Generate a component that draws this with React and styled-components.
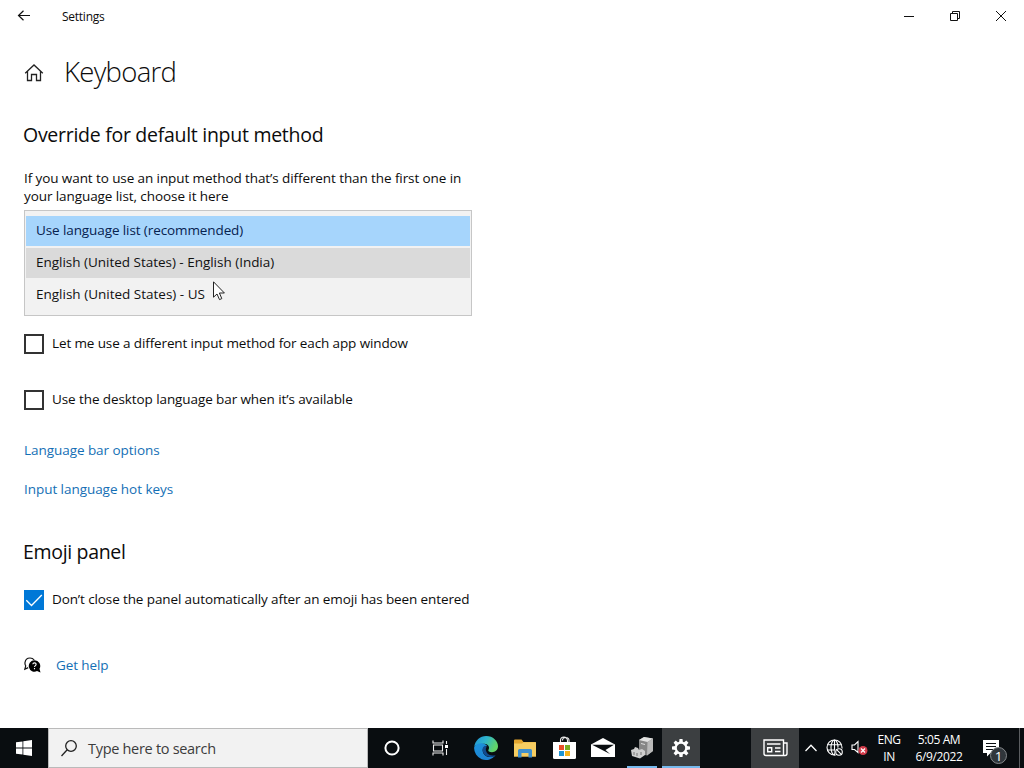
import React, { useState } from "react";
import styled, { createGlobalStyle } from "styled-components";

const GlobalStyle = createGlobalStyle`
    * {
        box-sizing: border-box;
    }

    body {
        margin: 0;
        overflow: hidden;
        font-family: "Open Sans", "Noto Sans", sans-serif;
        color: #0c0c0c;
    }
`;

const Screen = styled.div`
    position: relative;
    display: flex;
    flex-direction: column;
    width: 1024px;
    height: 768px;
    background: #fff;
`;

const TitleBar = styled.header`
    display: flex;
    align-items: center;
    height: 32px;
    padding-left: 17px;
`;

const WindowTitle = styled.span`
    flex: 1;
    margin-left: 31px;
    padding-top: 1px;
    font-size: 12px;
    letter-spacing: -0.25px;
`;

const WindowButton = styled.button`
    display: flex;
    align-items: center;
    justify-content: center;
    width: 46px;
    height: 32px;
    padding: 0;
    border: 0;
    background: none;
`;

const Content = styled.main`
    flex: 1;
    display: flex;
    flex-direction: column;
    align-items: flex-start;
    padding: 20px 24px 0;
`;

const PageHeader = styled.div`
    display: flex;
    align-items: center;
    height: 42px;
`;

const PageTitle = styled.h1`
    margin: 0 0 0 20px;
    padding-bottom: 2px;
    font-size: 27.5px;
    font-weight: 350;
    line-height: 40px;
    letter-spacing: -0.7px;
`;

const SectionTitle = styled.h2`
    margin: ${props => props.$top}px 0 0 -1px;
    font-size: 19.5px;
    font-weight: 400;
    line-height: 28px;
    letter-spacing: ${props => props.$track || 0}px;
`;

const Paragraph = styled.p`
    margin: 20px 0 5px;
    font-size: 13.5px;
    line-height: 18px;
`;

const Line = styled.span`
    display: block;
    white-space: nowrap;
    letter-spacing: ${props => props.$track || 0}px;
`;

const OptionList = styled.ul`
    display: flex;
    flex-direction: column;
    gap: 2px;
    width: 448px;
    height: 106px;
    margin: 0 0 18px;
    padding: 5px 1px;
    border: 1px solid #c6c6c6;
    background: #f2f2f2;
    list-style: none;
`;

const Option = styled.li`
    height: 30px;
    padding-left: 10px;
    font-size: 13.5px;
    line-height: 29px;
    letter-spacing: ${props => props.$track || 0}px;
    color: ${props => props.$selected ? '#07224f' : '#111'};
    background: ${props => props.$selected ? '#a6d5fc' : props.$hovered ? '#dadada' : 'transparent'};
`;

const CheckRow = styled.label`
    display: flex;
    gap: 8px;
    height: 20px;
    margin-top: ${props => props.$top || 0}px;
    font-size: 13.5px;
    line-height: 18px;
`;

const CheckBox = styled.span`
    display: flex;
    align-items: center;
    justify-content: center;
    width: 20px;
    height: 20px;
    border: ${props => props.$checked ? 'none' : '2px solid #333'};
    background: ${props => props.$checked ? '#0078d7' : '#fff'};
`;

const Link = styled.a`
    margin-top: ${props => props.$top || 0}px;
    font-size: 13.5px;
    line-height: 19px;
    letter-spacing: ${props => props.$track || 0}px;
    color: #146fb5;
`;

const HelpRow = styled.div`
    display: flex;
    align-items: center;
    gap: 15px;
    margin-top: 46px;
`;

const Pointer = styled.svg`
    position: absolute;
    left: 213px;
    top: 281px;
`;

const Taskbar = styled.footer`
    display: flex;
    height: 40px;
    background: #090d10;
    color: #fff;
`;

const TaskButton = styled.div`
    display: flex;
    align-items: center;
    justify-content: center;
    width: ${props => props.$width || 48}px;
    height: 40px;
    background: ${props => props.$active ? '#3c3f41' : 'transparent'};
`;

const AppButton = styled(TaskButton)`
    width: ${props => props.$open && !props.$active ? 30 : 38}px;
    margin: ${props => props.$open && !props.$active ? '0 5px 0 4px' : '0 1px 0 0'};
    border-bottom: 2px solid ${props => props.$open ? '#76b9ed' : 'transparent'};
    border-top: 2px solid transparent;
`;

const SearchBox = styled.div`
    display: flex;
    align-items: center;
    width: 320px;
    padding-left: 12px;
    border: 1px solid #bababa;
    background: #f2f2f2;
    color: #3c3c3c;
    font-size: 14.5px;
`;

const SearchText = styled.span`
    margin-left: 11px;
    letter-spacing: -0.3px;
`;

const Apps = styled.div`
    display: flex;
    flex: 1;
    padding-left: 3px;
`;

const TrayText = styled.div`
    width: ${props => props.$width}px;
    padding-top: 3px;
    font-size: 12px;
    line-height: 17px;
    text-align: center;
    letter-spacing: -0.4px;
    white-space: nowrap;
`;

const ShowDesktop = styled.div`
    width: 5px;
    border-left: 1px solid #5a5d60;
`;

const BackIcon = () => (
    <svg width="14" height="12" viewBox="0 0 14 12" fill="none" stroke="#111" strokeWidth="1.2">
        <path d="M13 5.5H1.5M6.5 .7 1.5 5.5l5 4.8" />
    </svg>
);

const HomeIcon = () => (
    <svg width="20" height="20" viewBox="0 0 20 20" fill="none" stroke="#222" strokeWidth="1.3">
        <path d="M1.2 10.2 10 2l8.8 8.2M3.5 8.5v9h4v-6h5v6h4v-9" />
    </svg>
);

const CheckIcon = () => (
    <svg width="20" height="20" viewBox="0 0 20 20" fill="none" stroke="#fff" strokeWidth="1.3">
        <path d="M2.3 10.3 7.5 15.5 17.8 5" />
    </svg>
);

const HelpIcon = () => (
    <svg width="17" height="17" viewBox="0 0 17 17">
        <path d="M4.2 10.600.8 12.300 1.700 8.800A5 5 0 0 1 1 5.500C1.400 2.800 3.500 1 6 1c1.800 0 3.300.8 4.200 2" fill="none" stroke="#111" strokeWidth="1.200" />
        <path d="M10.400 3.300a5.700 5.700 0 1 0 2.600 10.800l3.500 1.500-1-3.800A5.700 5.700 0 0 0 10.400 3.300z" fill="#000" />
        <path d="M8.800 7.300c.2-2 3.400-1.900 3.300.1 0 1.200-1.600 1.200-1.600 2.700M10.500 11v1.200" fill="none" stroke="#fff" strokeWidth="1.100" />
    </svg>
);

const EdgeIcon = () => (
    <svg width="24" height="24" viewBox="0 0 24 24">
        <defs>
            <linearGradient id="edgeTop" x1="0" y1="0" x2="1" y2=".4">
                <stop offset="0" stopColor="#1f8fd6" />
                <stop offset=".5" stopColor="#2eb4cc" />
                <stop offset="1" stopColor="#62d468" />
            </linearGradient>
            <linearGradient id="edgeLow" x1="0" y1="0" x2=".8" y2="1">
                <stop offset="0" stopColor="#1c93dc" />
                <stop offset="1" stopColor="#1d7fcf" />
            </linearGradient>
        </defs>
        <path d="M.2 11C1 4.500 6 0 12.200 0 19 0 24 5 24 10.300c0 3.700-2.800 5.900-6 5.900-2.600 0-4.300-1-3.600-2.200 2-3-.6-6.200-4.200-6.200C5.600 7.800 1.800 8.800.2 11z" fill="url(#edgeTop)" />
        <path d="M.1 11.500C1.500 8.400 5 6.800 8.800 7.500c3 .6 4 1.800 4.400 2.700-2.800-.4-4.700 1.500-4.500 4.500.3 4.500 5 7.700 10.500 5.900l2-.8A12 12 0 0 1 .1 11.500z" fill="url(#edgeLow)" />
        <path d="M11 9.800c-2.300 1-2.800 3-2.300 5.300.9 4.300 5.300 6.900 10.300 5.600 1.200-.3 2.200-1 2.800-1.700-3.600 1.300-7.500.2-9.200-2.800-1.100-1.900-1-3.700-.1-5.200z" fill="#114b8e" />
    </svg>
);

const FolderIcon = () => (
    <svg width="22" height="19" viewBox="0 0 22 19">
        <path d="M0 1.500Q0 .5 1 .5h6.500L9.500 3H21q1 0 1 1v13.500H0z" fill="#e3a52f" />
        <path d="M0 4.500h8l1.500-1.300H22v14.300H0z" fill="#f6cd62" />
        <path d="M4 18.500v-7q0-1.500 1.500-1.500h11q1.500 0 1.500 1.500v7h-3.500V14h-7v4.500z" fill="#3f90ce" />
    </svg>
);

const StoreIcon = () => (
    <svg width="23" height="24" viewBox="0 0 23 24">
        <path d="M7.500 7V4.500a3.500 3.500 0 0 1 7 0V7M9.500 4.500c0-4 6.500-4 6.500 0V7" fill="none" stroke="#eee" strokeWidth="1.100" />
        <path d="M0 6h23v15.500q0 1.500-1.500 1.500h-20Q0 23 0 21.500z" fill="#fff" />
        <path d="M6 9h5v5H6z" fill="#e8502a" />
        <path d="M12 9h5v5h-5z" fill="#7aae22" />
        <path d="M6 15h5v5H6z" fill="#1e94d2" />
        <path d="M12 15h5v5h-5z" fill="#f4b21b" />
    </svg>
);

const MailIcon = () => (
    <svg width="24" height="20" viewBox="0 0 24 20">
        <path d="M0 6.500 12 0l12 6.500V19H0z" fill="#fff" />
        <path d="M1 6.800h22L14.500 12l4.500 4L1 6.800z" fill="#0a0e11" />
    </svg>
);

const DeviceIcon = () => (
    <svg width="23" height="22" viewBox="0 0 23 22">
        <path d="M8 3 13 0l9 1.500v12.500l-6 4.500-8-2z" fill="#868686" />
        <path d="M8 3 13 0l9 1.500L16.500 5z" fill="#e2e2e2" />
        <path d="M16.500 5 22 1.500V14l-6 4.500z" fill="#b9b9b9" />
        <path d="M10 6.500l4 1" stroke="#ddd" />
        <path d="M0 13l3-1 1-2 3 1 1 2 3-1 3 2v4l-5 3.500L1 19z" fill="#cfcfcf" />
        <path d="M3 15v3M6 16v3M10 15v3" stroke="#777" strokeWidth="1" />
    </svg>
);

const GearIcon = () => (
    <svg width="20" height="20" viewBox="-10 -10 20 20">
        {[0, 45, 90, 135, 180, 225, 270, 315].map(angle => (
            <path key={angle} d="M-1.900-5.500-1.500-9h3l.4 3.500z" transform={`rotate(${angle})`} fill="#fff" />
        ))}
        <circle r="5.300" fill="none" stroke="#fff" strokeWidth="2.200" />
    </svg>
);

const NewsIcon = () => (
    <svg width="25" height="18" viewBox="0 0 25 18" fill="none" stroke="#fff" strokeWidth="1.400">
        <path d="M20.500 4V1H1v13.500Q1 16.500 3 16.500h19q2 0 2-2V4h-3.500v12M4 5h13.500M12 9h5.500M12 12.500h5.500" />
        <path d="M4.700 8.700h4v4h-4z" />
    </svg>
);

const GlobeIcon = () => (
    <svg width="18" height="18" viewBox="0 0 18 18" fill="none" stroke="#fff" strokeWidth="1.100">
        <circle cx="8.500" cy="8.500" r="7.500" />
        <ellipse cx="8.500" cy="8.500" rx="3.500" ry="7.500" />
        <path d="M8.500 1v15M1.500 5.800h14M1 11h14" />
        <circle cx="13" cy="13" r="4.500" fill="#090d10" stroke="none" />
        <circle cx="13" cy="13" r="3.300" />
        <path d="M10.700 10.700l4.600 4.600" />
    </svg>
);

const SpeakerIcon = () => (
    <svg width="17" height="16" viewBox="0 0 17 16">
        <path d="M1 5h2.500L7 1.500v11L3.500 9.500H1z" fill="none" stroke="#fff" strokeWidth="1.100" />
        <circle cx="12" cy="10.500" r="4.500" fill="#d13b4a" />
        <path d="M10 8.500l4 4M14 8.500l-4 4" stroke="#fff" strokeWidth="1.200" />
    </svg>
);

const NotificationIcon = () => (
    <svg width="26" height="34" viewBox="0 -8 26 34">
        <path d="M1 1h16v13H8.500L5 17.500V14H1z" fill="#fff" />
        <path d="M4 4.500h10M4 7.500h10M4 10.500h7" stroke="#0a0e11" />
        <circle cx="16.500" cy="16.500" r="8" fill="#30363b" stroke="#84888b" />
        <text x="16.500" y="21.500" fontSize="13.500" fill="#fff" textAnchor="middle">1</text>
    </svg>
);

const options = [
    { label: "Use language list (recommended)", track: -0.1 },
    { label: "English (United States) - English (India)", track: -0.02 },
    { label: "English (United States) - US", track: 0 },
];

const App = () => {
    const [selected, setSelected] = useState(0);
    const [keepOpen, setKeepOpen] = useState(true);

    return (
        <>
            <GlobalStyle />
            <Screen>
                <TitleBar>
                    <BackIcon />
                    <WindowTitle>Settings</WindowTitle>
                    <WindowButton aria-label="Minimize">
                        <svg width="10" height="10" stroke="#111"><path d="M0 5.500h10" /></svg>
                    </WindowButton>
                    <WindowButton aria-label="Restore">
                        <svg width="10" height="10" fill="none" stroke="#111"><path d="M.5 2.500h7v7h-7zM2.500 2.500v-2h7v7h-2" /></svg>
                    </WindowButton>
                    <WindowButton aria-label="Close">
                        <svg width="10" height="10" stroke="#111"><path d="M0 0l10 10M10 0L0 10" /></svg>
                    </WindowButton>
                </TitleBar>

                <Content>
                    <PageHeader>
                        <HomeIcon />
                        <PageTitle>Keyboard</PageTitle>
                    </PageHeader>

                    <SectionTitle $top={27} $track={-0.28}>Override for default input method</SectionTitle>
                    <Paragraph>
                        <Line $track={-0.09}>If you want to use an input method that’s different than the first one in</Line>
                        <Line $track={-0.08}>your language list, choose it here</Line>
                    </Paragraph>
                    <OptionList>
                        {options.map((option, index) => (
                            <Option
                                key={option.label}
                                $selected={index === selected}
                                $hovered={index === 1}
                                $track={option.track}
                                onClick={() => setSelected(index)}
                            >
                                {option.label}
                            </Option>
                        ))}
                    </OptionList>

                    <CheckRow>
                        <CheckBox />
                        <Line $track={-0.12}>Let me use a different input method for each app window</Line>
                    </CheckRow>
                    <CheckRow $top={36}>
                        <CheckBox />
                        <Line $track={-0.09}>Use the desktop language bar when it’s available</Line>
                    </CheckRow>
                    <Link $top={31} $track={-0.05}>Language bar options</Link>
                    <Link $top={20} $track={-0.05}>Input language hot keys</Link>

                    <SectionTitle $top={39} $track={-0.33}>Emoji panel</SectionTitle>
                    <CheckRow $top={24} onClick={() => setKeepOpen(!keepOpen)}>
                        <CheckBox $checked={keepOpen}>{keepOpen && <CheckIcon />}</CheckBox>
                        <Line $track={-0.11}>Don’t close the panel automatically after an emoji has been entered</Line>
                    </CheckRow>

                    <HelpRow>
                        <HelpIcon />
                        <Link $track={-0.1}>Get help</Link>
                    </HelpRow>
                </Content>

                <Taskbar>
                    <TaskButton>
                        <svg width="16" height="16" viewBox="0 0 16 16" fill="#fff">
                            <path d="M0 2.300 6.500 1.400v6.200H0zM7.300 1.300 16 0v7.600H7.300zM0 8.400h6.500v6.200L0 13.700zM7.300 8.400H16V16l-8.700-1.300z" />
                        </svg>
                    </TaskButton>
                    <SearchBox>
                        <svg width="16" height="17" viewBox="0 0 16 17" fill="none" stroke="#222" strokeWidth="1.300">
                            <circle cx="10" cy="6" r="5.300" />
                            <path d="M6.200 9.800.5 16" />
                        </svg>
                        <SearchText>Type here to search</SearchText>
                    </SearchBox>
                    <TaskButton>
                        <svg width="16" height="16"><circle cx="8" cy="8" r="6.600" fill="none" stroke="#fff" strokeWidth="2" /></svg>
                    </TaskButton>
                    <TaskButton>
                        <svg width="17" height="16" viewBox="0 0 17 16" fill="none" stroke="#eee" strokeWidth="1.100">
                            <path d="M1 .5v2.500h10V.5M1 15.500V13h10v2.500M1.500 5h9v6h-9zM14.500 1v3M14.500 9v6" />
                            <path d="M13 5h3v3h-3z" fill="#fff" stroke="none" />
                        </svg>
                    </TaskButton>
                    <Apps>
                        <AppButton><EdgeIcon /></AppButton>
                        <AppButton><FolderIcon /></AppButton>
                        <AppButton><StoreIcon /></AppButton>
                        <AppButton><MailIcon /></AppButton>
                        <AppButton $open><DeviceIcon /></AppButton>
                        <AppButton $open $active><GearIcon /></AppButton>
                    </Apps>
                    <TaskButton $active><NewsIcon /></TaskButton>
                    <TaskButton $width={24}>
                        <svg width="12" height="8" fill="none" stroke="#fff" strokeWidth="1.300"><path d="M.5 7 6 1.300 11.500 7" /></svg>
                    </TaskButton>
                    <TaskButton $width={24}><GlobeIcon /></TaskButton>
                    <TaskButton $width={24}><SpeakerIcon /></TaskButton>
                    <TrayText $width={36}>ENG<br />IN</TrayText>
                    <TrayText $width={64}>5:05 AM<br />6/9/2022</TrayText>
                    <TaskButton><NotificationIcon /></TaskButton>
                    <ShowDesktop />
                </Taskbar>

                <Pointer width="13" height="20" viewBox="0 0 13 20">
                    <path d="M.5.800v15.400L4 13l2.500 5.600 2.300-1L6.400 12h5z" fill="#fff" stroke="#222" />
                </Pointer>
            </Screen>
        </>
    );
};

export default App;
